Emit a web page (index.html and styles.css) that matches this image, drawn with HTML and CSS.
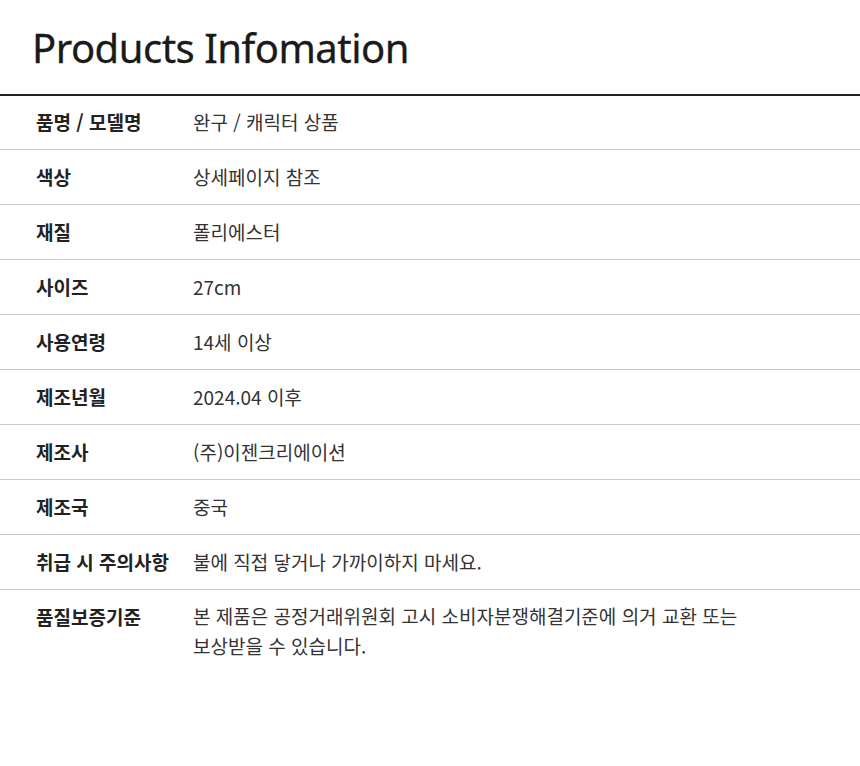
FILE: index.html
```html
<!DOCTYPE html>
<html lang="ko">
<head>
<meta charset="utf-8">
<link rel="stylesheet" href="styles.css">
</head>
<body>
<div class="page">
  <h1 class="title">Products Infomation</h1>
  <div class="table">
    <div class="row first"><div class="label">품명 / 모델명</div><div class="value">완구 / 캐릭터 상품</div></div>
    <div class="row"><div class="label">색상</div><div class="value">상세페이지 참조</div></div>
    <div class="row"><div class="label">재질</div><div class="value">폴리에스터</div></div>
    <div class="row"><div class="label">사이즈</div><div class="value">27cm</div></div>
    <div class="row"><div class="label">사용연령</div><div class="value">14세 이상</div></div>
    <div class="row"><div class="label">제조년월</div><div class="value">2024.04 이후</div></div>
    <div class="row"><div class="label">제조사</div><div class="value">(주)이젠크리에이션</div></div>
    <div class="row"><div class="label">제조국</div><div class="value">중국</div></div>
    <div class="row"><div class="label">취급 시 주의사항</div><div class="value">불에 직접 닿거나 가까이하지 마세요.</div></div>
    <div class="row last"><div class="label">품질보증기준</div><div class="value">본 제품은 공정거래위원회 고시 소비자분쟁해결기준에 의거 교환 또는<br>보상받을 수 있습니다.</div></div>
  </div>
</div>
</body>
</html>
```
FILE: styles.css
```css
html, body {
  margin: 0;
  padding: 0;
  background: #ffffff;
}
body {
  font-family: "Noto Sans CJK KR", "Noto Sans", sans-serif;
  color: #222;
}
.page {
  width: 860px;
}
.title {
  margin: 0;
  padding: 20px 0 0 32px;
  height: 74px;
  box-sizing: border-box;
  font-family: "Noto Sans", "Noto Sans CJK KR", sans-serif;
  font-weight: 400;
  font-size: 40px;
  line-height: 56px;
  letter-spacing: -0.5px;
  color: #1a1a1a;
  -webkit-text-stroke: 0.3px #1a1a1a;
}
.table {
  border-top: 2px solid #222;
  margin-top: 20px;
}
.row {
  display: flex;
  align-items: flex-start;
  border-bottom: 1px solid #c8c8c8;
  padding: 12px 0 13px 36px;
  font-size: 19px;
  line-height: 29px;
}
.row.first {
  padding-top: 11px;
}
.row.last {
  border-bottom: none;
  padding-top: 12px;
}
.label {
  width: 157px;
  flex: none;
  font-weight: 700;
  color: #222;
}
.value {
  color: #333;
}
.row.last .value {
  line-height: 30px;
  margin-top: -1px;
}
```
